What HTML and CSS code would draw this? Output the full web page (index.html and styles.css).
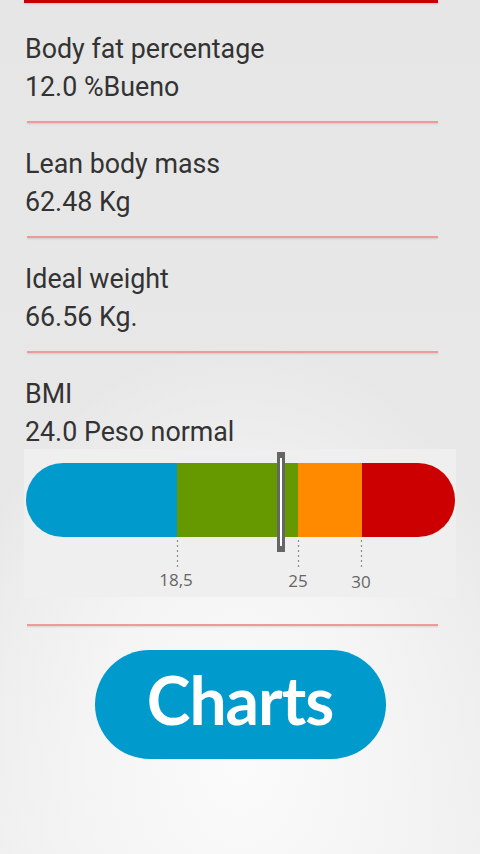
FILE: index.html
```html
<!DOCTYPE html>
<html lang="es">
<head>
    <meta charset="UTF-8">
    <meta name="viewport" content="width=device-width, initial-scale=1.0">
    <title>Body composition</title>
    <link rel="stylesheet" href="styles.css">
</head>
<body>
    <div class="screen">
        <div class="top-bar"></div>

        <div class="stat">
            <p class="stat-title">Body fat percentage</p>
            <p class="stat-value">12.0 %Bueno</p>
        </div>
        <div class="divider"></div>

        <div class="stat">
            <p class="stat-title">Lean body mass</p>
            <p class="stat-value">62.48 Kg</p>
        </div>
        <div class="divider"></div>

        <div class="stat">
            <p class="stat-title">Ideal weight</p>
            <p class="stat-value">66.56 Kg.</p>
        </div>
        <div class="divider"></div>

        <div class="stat">
            <p class="stat-title">BMI</p>
            <p class="stat-value">24.0 Peso normal</p>
        </div>

        <div class="bmi-chart">
            <svg width="432" height="148" viewBox="0 0 432 148">
                <defs>
                    <clipPath id="bar-clip">
                        <rect x="2" y="14" width="429" height="74" rx="37" ry="37" />
                    </clipPath>
                </defs>
                <g clip-path="url(#bar-clip)">
                    <rect x="2" y="14" width="151" height="74" fill="#009acc" />
                    <rect x="153" y="14" width="121" height="74" fill="#669900" />
                    <rect x="274" y="14" width="64" height="74" fill="#ff8a00" />
                    <rect x="338" y="14" width="93" height="74" fill="#cc0000" />
                </g>
                <g stroke="#8c8c8c" stroke-width="1.2" stroke-dasharray="2 3">
                    <line x1="153.5" y1="91" x2="153.5" y2="121" />
                    <line x1="274.5" y1="91" x2="274.5" y2="121" />
                    <line x1="337.5" y1="91" x2="337.5" y2="121" />
                </g>
                <rect x="253" y="3" width="8" height="100" fill="#666" />
                <rect x="256" y="9" width="2" height="88" fill="#fff" />
                <g class="tick-label">
                    <text x="152" y="137" text-anchor="middle">18,5</text>
                    <text x="274" y="138" text-anchor="middle">25</text>
                    <text x="337" y="139" text-anchor="middle">30</text>
                </g>
            </svg>
        </div>
        <div class="divider divider-last"></div>

        <button type="button" class="charts-button">Charts</button>
    </div>
</body>
</html>
```

FILE: styles.css
```css
body {
    margin: 0;
    padding: 0;
    font-family: Roboto, "Noto Sans", sans-serif;
    color: #333;
    background-color: #e8e8e8;
}

.screen {
    width: 480px;
    height: 854px;
    overflow: hidden;
    background:
        radial-gradient(ellipse 300px 420px at 240px 760px, #fbfbfb 0%, #f5f5f5 45%, rgba(240, 240, 240, 0) 100%),
        linear-gradient(#e6e6e6 0%, #e8e8e8 60%, #eeeeee 100%);
}

.top-bar {
    margin-left: 24px;
    width: 414px;
    height: 3px;
    background-color: #c60000;
    box-shadow: 0 1px 2px rgba(0, 0, 0, 0.15);
}

.stat {
    padding-left: 25px;
    margin-top: 22px;
}

.top-bar + .stat {
    margin-top: 27px;
}

.stat p {
    margin: 0;
    font-size: 26.8px;
    line-height: 38px;
}

.divider {
    margin: 15px 0 0 27px;
    width: 411px;
    height: 2px;
    background-color: #ec9a9a;
    box-shadow: 0 1px 2px rgba(0, 0, 0, 0.12);
}

.bmi-chart {
    margin: -2px 0 0 24px;
    width: 432px;
    height: 148px;
    background-color: #efefef;
}

.bmi-chart svg {
    display: block;
}

.tick-label text {
    font-family: "Open Sans", "DejaVu Sans", sans-serif;
    font-size: 17px;
    fill: #666;
}

.divider-last {
    margin-top: 27px;
}

.charts-button {
    display: block;
    margin: 24px auto 0;
    width: 291px;
    height: 109px;
    padding: 0 0 10px;
    border: none;
    border-radius: 56px;
    background-color: #009acc;
    color: #fff;
    font-family: Lato, "Open Sans", sans-serif;
    font-weight: bold;
    font-size: 66px;
    letter-spacing: -1px;
    cursor: pointer;
}
```
